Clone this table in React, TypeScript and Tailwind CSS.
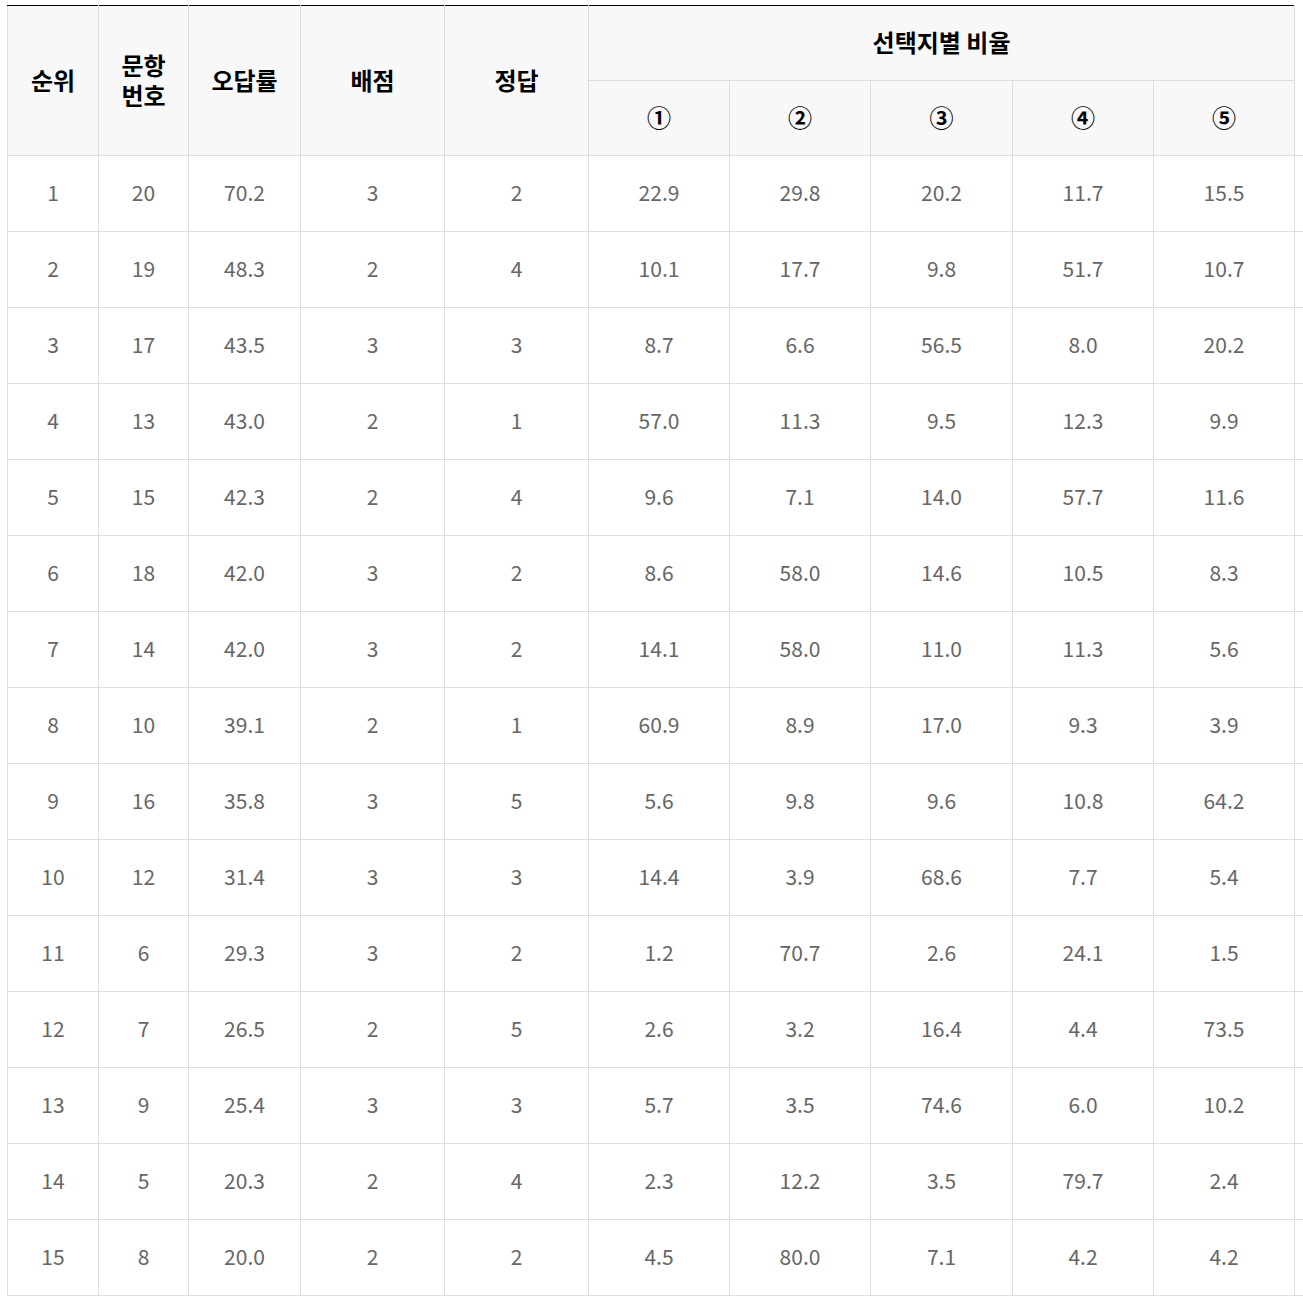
import React from "react";

const rows: (string | number)[][] = [
  [1, 20, "70.2", 3, 2, "22.9", "29.8", "20.2", "11.7", "15.5"],
  [2, 19, "48.3", 2, 4, "10.1", "17.7", "9.8", "51.7", "10.7"],
  [3, 17, "43.5", 3, 3, "8.7", "6.6", "56.5", "8.0", "20.2"],
  [4, 13, "43.0", 2, 1, "57.0", "11.3", "9.5", "12.3", "9.9"],
  [5, 15, "42.3", 2, 4, "9.6", "7.1", "14.0", "57.7", "11.6"],
  [6, 18, "42.0", 3, 2, "8.6", "58.0", "14.6", "10.5", "8.3"],
  [7, 14, "42.0", 3, 2, "14.1", "58.0", "11.0", "11.3", "5.6"],
  [8, 10, "39.1", 2, 1, "60.9", "8.9", "17.0", "9.3", "3.9"],
  [9, 16, "35.8", 3, 5, "5.6", "9.8", "9.6", "10.8", "64.2"],
  [10, 12, "31.4", 3, 3, "14.4", "3.9", "68.6", "7.7", "5.4"],
  [11, 6, "29.3", 3, 2, "1.2", "70.7", "2.6", "24.1", "1.5"],
  [12, 7, "26.5", 2, 5, "2.6", "3.2", "16.4", "4.4", "73.5"],
  [13, 9, "25.4", 3, 3, "5.7", "3.5", "74.6", "6.0", "10.2"],
  [14, 5, "20.3", 2, 4, "2.3", "12.2", "3.5", "79.7", "2.4"],
  [15, 8, "20.0", 2, 2, "4.5", "80.0", "7.1", "4.2", "4.2"],
];

const widths = [91, 90, 112, 144, 144, 141, 141, 142, 141, 141];

const th = "border border-[#dddddd] bg-[#f8f8f8] text-[24px] font-bold text-black leading-[30px] p-0 pb-[2px]";

export default function App() {
  return (
    <div
      className="w-[1303px] h-[1304px] overflow-hidden bg-white pt-[5px] pl-[7px]"
      style={{ fontFamily: '"Noto Sans CJK KR", "Noto Sans", sans-serif' }}
    >
      <table className="border-collapse table-fixed w-[1296px]">
        <colgroup>
          {widths.map((w, i) => (
            <col key={i} style={{ width: w }} />
          ))}
          <col style={{ width: 9 }} />
        </colgroup>
        <thead>
          <tr className="h-[75px]">
            <th rowSpan={2} className={th + " border-t-black"}>순위</th>
            <th rowSpan={2} className={th + " border-t-black"}>
              <span className="block">문항</span>
              <span className="block">번호</span>
            </th>
            <th rowSpan={2} className={th + " border-t-black"}>오답률</th>
            <th rowSpan={2} className={th + " border-t-black"}>배점</th>
            <th rowSpan={2} className={th + " border-t-black"}>정답</th>
            <th colSpan={5} className={th + " border-t-black"}>선택지별 비율</th>
            <th rowSpan={2} className="border-b border-[#dddddd] bg-white p-0"></th>
          </tr>
          <tr className="h-[75px]">
            {["①", "②", "③", "④", "⑤"].map((c) => (
              <th key={c} className={th}>{c}</th>
            ))}
          </tr>
        </thead>
        <tbody>
          {rows.map((r, i) => (
            <tr key={i} className="h-[76px]">
              {r.map((v, j) => (
                <td key={j} className="border border-[#dddddd] text-center text-[21px] text-[#666666] leading-[28px] p-0 pb-[4px]">
                  {v}
                </td>
              ))}
              <td className="border-l border-b border-[#dddddd] p-0"></td>
            </tr>
          ))}
        </tbody>
      </table>
    </div>
  );
}
